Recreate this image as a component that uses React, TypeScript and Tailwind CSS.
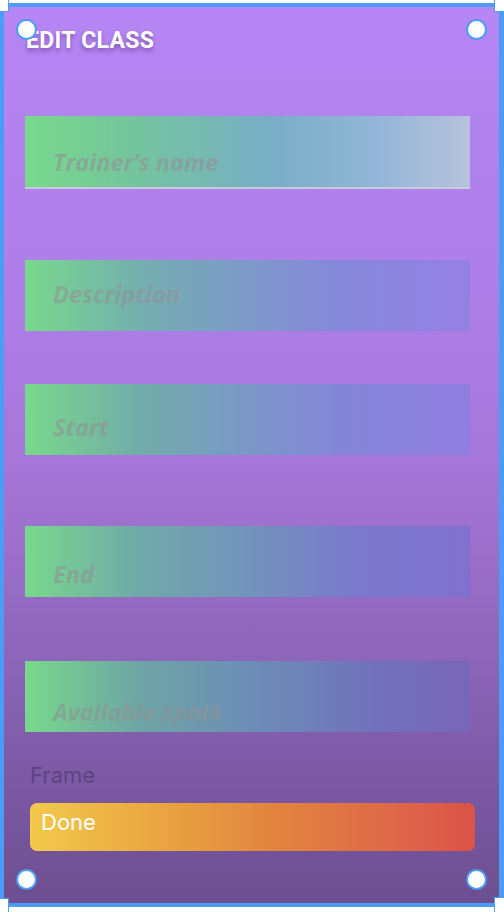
const fields = [
  {
    label: "Trainer\u2019s name",
    mt: "mt-[62px]",
    h: "h-[73px]",
    pb: "pb-[10px]",
    bg: "bg-[linear-gradient(90deg,#78d98b_0%,#74c49e_25%,#78aec6_55%,#94b6d8_80%,#b8c2dc_100%)] border-b-2 border-[#c6ccdc]",
  },
  {
    label: "Description",
    mt: "mt-[71px]",
    h: "h-[71px]",
    pb: "pb-[22px]",
    bg: "bg-[linear-gradient(90deg,#78d98b_0%,#74b0ae_25%,#7a9ec4_45%,#8588da_70%,#9580e4_100%)]",
  },
  {
    label: "Start",
    mt: "mt-[53px]",
    h: "h-[71px]",
    pb: "pb-[13px]",
    bg: "bg-[linear-gradient(90deg,#78d98b_0%,#72ada8_25%,#789cc2_45%,#8386d8_70%,#917ee0_100%)]",
  },
  {
    label: "End",
    mt: "mt-[71px]",
    h: "h-[71px]",
    pb: "pb-[8px]",
    bg: "bg-[linear-gradient(90deg,#78d98b_0%,#70aaa8_25%,#7294bc_50%,#7a78cc_75%,#8270d0_100%)]",
  },
  {
    label: "Available spots",
    mt: "mt-[64px]",
    h: "h-[71px]",
    pb: "pb-[5px]",
    bg: "bg-[linear-gradient(90deg,#78d98b_0%,#6ea6a4_25%,#6c8eb6_50%,#7172bc_78%,#7866b8_100%)]",
  },
];

function Handle({ pos }: { pos: string }) {
  return (
    <div
      className={`absolute ${pos} w-[21px] h-[21px] rounded-full bg-white border-[2.5px] border-[#4a9cf6]`}
    />
  );
}

export default function App() {
  return (
    <div className="relative w-[504px] h-[912px] bg-white overflow-hidden">
      {/* selection frame */}
      <div className="mt-[3px] h-[904px] border-l-4 border-r-[5px] border-y-4 border-[#4a9cf6]">
        <div className="h-full flex flex-col pl-[21px] pr-[29px] pt-[20px] bg-[linear-gradient(180deg,#b586f4_0%,#ae7fe8_30%,#a677da_50%,#9a6ec8_62%,#8a63b6_75%,#7c5aa6_85%,#6c4f90_100%)]">
          <h1 className="pl-[1px] text-[23px] leading-[27px] font-bold text-white tracking-[0.3px] font-['Roboto',sans-serif] [text-shadow:0_3px_4px_rgba(70,30,110,0.45)]">
            EDIT CLASS
          </h1>

          {fields.map((f) => (
            <div
              key={f.label}
              className={`${f.mt} ${f.h} ${f.pb} ${f.bg} w-[445px] flex items-end pl-[28px]`}
            >
              <span className="text-[23.5px] leading-[30px] font-bold italic text-[rgba(145,145,148,0.6)] font-['Open_Sans',sans-serif]">
                {f.label}
              </span>
            </div>
          ))}

          <div className="mt-[31px] pl-[5px] text-[22px] leading-[24px] text-[#5d437f] font-['Inter',sans-serif]">
            Frame
          </div>

          <button className="mt-[16px] ml-[5px] w-[445px] h-[48px] rounded-[7px] flex items-start pt-[5px] pl-[11px] text-[22px] leading-[28px] text-white font-['Inter',sans-serif] bg-[linear-gradient(90deg,#f2c94a_0%,#e9a440_30%,#e2843f_55%,#de6a48_80%,#dc5248_100%)]">
            Done
          </button>
        </div>
      </div>

      {/* resize handles */}
      <Handle pos="left-[16px] top-[19px]" />
      <Handle pos="left-[466px] top-[19px]" />
      <Handle pos="left-[16px] top-[869px]" />
      <Handle pos="left-[466px] top-[869px]" />

      {/* corner squares */}
      <div className="absolute left-[-2px] top-[-2px] w-[11px] h-[14px] bg-white border border-[#4a9cf6]" />
      <div className="absolute left-[494px] top-[-2px] w-[12px] h-[14px] bg-white border border-[#4a9cf6]" />
      <div className="absolute left-[-2px] top-[898px] w-[11px] h-[16px] bg-white border border-[#4a9cf6]" />
      <div className="absolute left-[494px] top-[897px] w-[12px] h-[17px] bg-white border border-[#4a9cf6]" />
    </div>
  );
}
